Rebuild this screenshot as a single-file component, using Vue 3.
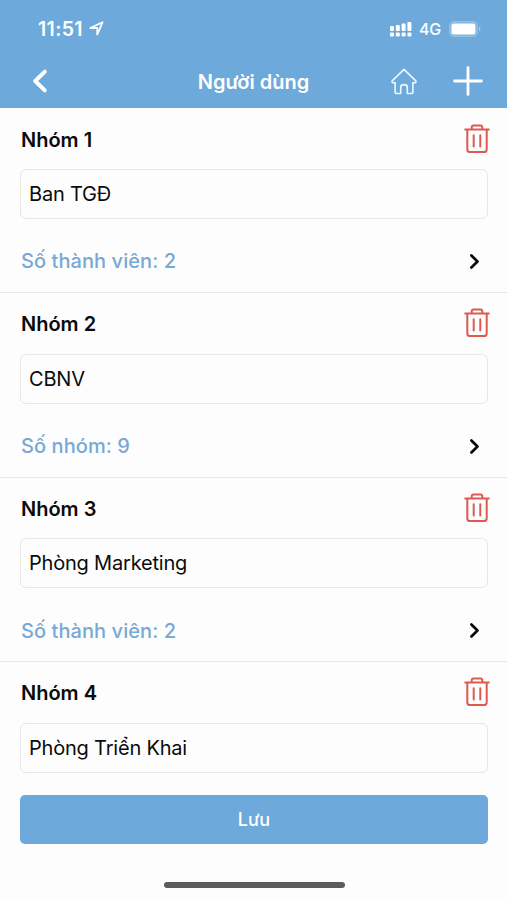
<script setup>
const groups = [
  { title: 'Nhóm 1', name: 'Ban TGĐ', summary: 'Số thành viên: 2' },
  { title: 'Nhóm 2', name: 'CBNV', summary: 'Số nhóm: 9' },
  { title: 'Nhóm 3', name: 'Phòng Marketing', summary: 'Số thành viên: 2' },
  { title: 'Nhóm 4', name: 'Phòng Triển Khai', summary: '' },
]
</script>

<template>
  <div class="screen">
    <header class="header">
      <div class="status">
        <span class="time">11:51</span>
        <svg class="location" width="15" height="15" viewBox="0 0 14 14">
          <path d="M1.2 6.5 12.6 1.2 7.7 12.6V6.5Z" fill="none" stroke="#fff" stroke-width="1.7" stroke-linejoin="round" />
        </svg>
        <svg class="signal" width="22" height="16" viewBox="0 0 22 16" fill="#fff">
          <rect x="0" y="5" width="4" height="5" rx="1" />
          <rect x="5.8" y="4" width="4" height="6" rx="1" />
          <rect x="11.6" y="2.5" width="4" height="7.5" rx="1" />
          <rect x="17.4" y="1" width="4" height="9" rx="1" />
          <rect x="0" y="11.5" width="4" height="4" rx="1.2" />
          <rect x="5.8" y="11.5" width="4" height="4" rx="1.2" />
          <rect x="11.6" y="11.5" width="4" height="4" rx="1.2" />
          <rect x="17.4" y="11.5" width="4" height="4" rx="1.2" />
        </svg>
        <span class="network">4G</span>
        <svg class="battery" width="33" height="16" viewBox="0 0 33 16">
          <rect x="0.7" y="0.7" width="27.6" height="14.6" rx="4.2" fill="#fff" fill-opacity=".12" stroke="#fff" stroke-opacity=".25" stroke-width="1.3" />
          <rect x="2.4" y="2.6" width="24" height="10.8" rx="2.2" fill="#fff" />
          <path d="M30 5.4C31.9 6.4 31.9 9.6 30 10.6Z" fill="#fff" fill-opacity=".4" />
        </svg>
      </div>
      <nav class="nav">
        <svg class="back" width="16" height="26" viewBox="0 0 16 26">
          <path d="M12.8 3.6 3.2 13 12.8 22.4" fill="none" stroke="#fff" stroke-width="4" stroke-linecap="round" stroke-linejoin="round" />
        </svg>
        <h1 class="title">Người dùng</h1>
        <svg class="home" width="26" height="27" viewBox="0 0 26 27">
          <path d="M13 1.4 1.2 12.8Q.6 14.6 2 14.7H4.1V23.7Q4.1 25.5 5.9 25.5H9.7V19.2Q9.7 16.6 13 16.6T16.3 19.2V25.5H20.1Q21.9 25.5 21.9 23.7V14.7H24Q25.4 14.6 24.8 12.8Z" fill="none" stroke="#e9fbff" stroke-width="1.6" stroke-linejoin="round" />
        </svg>
        <svg class="plus" width="30" height="30" viewBox="0 0 30 30">
          <path d="M15 1.6V28.4M1.6 15H28.4" stroke="#fff" stroke-width="2.8" stroke-linecap="round" />
        </svg>
      </nav>
    </header>

    <main class="list">
      <section v-for="group in groups" :key="group.title" class="group">
        <div class="group-head">
          <h2 class="group-title">{{ group.title }}</h2>
          <svg class="trash" width="26" height="30" viewBox="0 0 26 30" fill="none" stroke="#dc5a50" stroke-width="2" stroke-linecap="round" stroke-linejoin="round">
            <path d="M1.2 5.6H24.8M3.3 5.6V25.2Q3.3 28.1 6.2 28.1H19.8Q22.7 28.1 22.7 25.2V5.6M7.7 5.3V3.5Q7.7 1.6 9.6 1.6H16.4Q18.3 1.6 18.3 3.5V5.3" />
            <path d="M9.7 11.2V22.4M16.3 11.2V22.4" />
          </svg>
        </div>
        <div class="field">{{ group.name }}</div>
        <div v-if="group.summary" class="summary">
          <span>{{ group.summary }}</span>
          <svg width="11" height="17" viewBox="0 0 11 17">
            <path d="M2.4 2.5 8.5 8.5 2.4 14.5" fill="none" stroke="#090909" stroke-width="2.7" stroke-linecap="round" stroke-linejoin="round" />
          </svg>
        </div>
      </section>
    </main>

    <footer class="footer">
      <button class="save" type="button">Lưu</button>
      <div class="home-bar"></div>
    </footer>
  </div>
</template>

<style>
body {
  margin: 0;
  background: #fdfdfd;
}
</style>

<style scoped>
.screen {
  display: flex;
  flex-direction: column;
  width: 507px;
  height: 900px;
  overflow: hidden;
  background: #fdfdfd;
  color: #0b0b0b;
  font-family: Inter, "Liberation Sans", sans-serif;
  font-size: 20px;
}
.header {
  flex: none;
  height: 108.4px;
  background: #6da9db;
  color: #fff;
}
.status {
  display: flex;
  align-items: center;
  height: 57px;
  padding: 0 26px 0 38px;
}
.time {
  width: 46px;
  font-size: 19.5px;
  font-weight: 600;
  letter-spacing: 0.35px;
}
.location {
  margin-left: 5px;
}
.signal {
  margin-left: auto;
}
.network {
  width: 22px;
  margin-left: 7px;
  font-size: 16px;
  font-weight: 500;
  letter-spacing: -0.2px;
}
.battery {
  margin-left: 8px;
  margin-right: -1px;
}
.nav {
  display: grid;
  grid-template-columns: 66px 1fr 66px 60px;
  align-items: center;
  height: 48px;
}
.back {
  margin-left: 32px;
}
.title {
  margin: 0;
  padding: 2px 0 0 60px;
  text-align: center;
  font-size: 20px;
  font-weight: 600;
  line-height: 26px;
}
.home {
  margin-left: 10px;
}
.plus {
  margin-left: 6px;
}
.list {
  flex: none;
}
.group {
  box-sizing: border-box;
  height: 184.6px;
  border-bottom: 1.5px solid #e9e9e9;
}
.group:last-child {
  height: 165px;
  border-bottom: 0;
}
.group-head {
  display: flex;
  align-items: center;
  justify-content: space-between;
  height: 60.6px;
  padding: 0 17.5px 0 21px;
}
.group-title {
  margin: 0;
  padding-top: 2px;
  font-size: 20px;
  font-weight: 600;
}
.field {
  box-sizing: border-box;
  height: 50px;
  margin: 0 19px 0 20px;
  padding-left: 8px;
  border: 1px solid #e8e8e8;
  border-radius: 6px;
  line-height: 49px;
  letter-spacing: -0.2px;
}
.summary {
  display: flex;
  align-items: center;
  justify-content: space-between;
  height: 51px;
  margin-top: 17px;
  padding: 0 27px 0 21px;
  color: #76a9d6;
  font-weight: 500;
  letter-spacing: 0.07px;
}
.footer {
  display: flex;
  flex-direction: column;
  align-items: center;
  padding: 0 19px 0 20px;
  margin-top: -32px;
}
.save {
  width: 100%;
  height: 49px;
  padding: 0;
  border: 0;
  border-radius: 5px;
  background: #6da9db;
  color: #fff;
  font: 500 18px/49px Inter, "Liberation Sans", sans-serif;
}
.home-bar {
  width: 181px;
  height: 6px;
  margin-top: 38px;
  border-radius: 3px;
  background: #5c5c5c;
}
</style>
